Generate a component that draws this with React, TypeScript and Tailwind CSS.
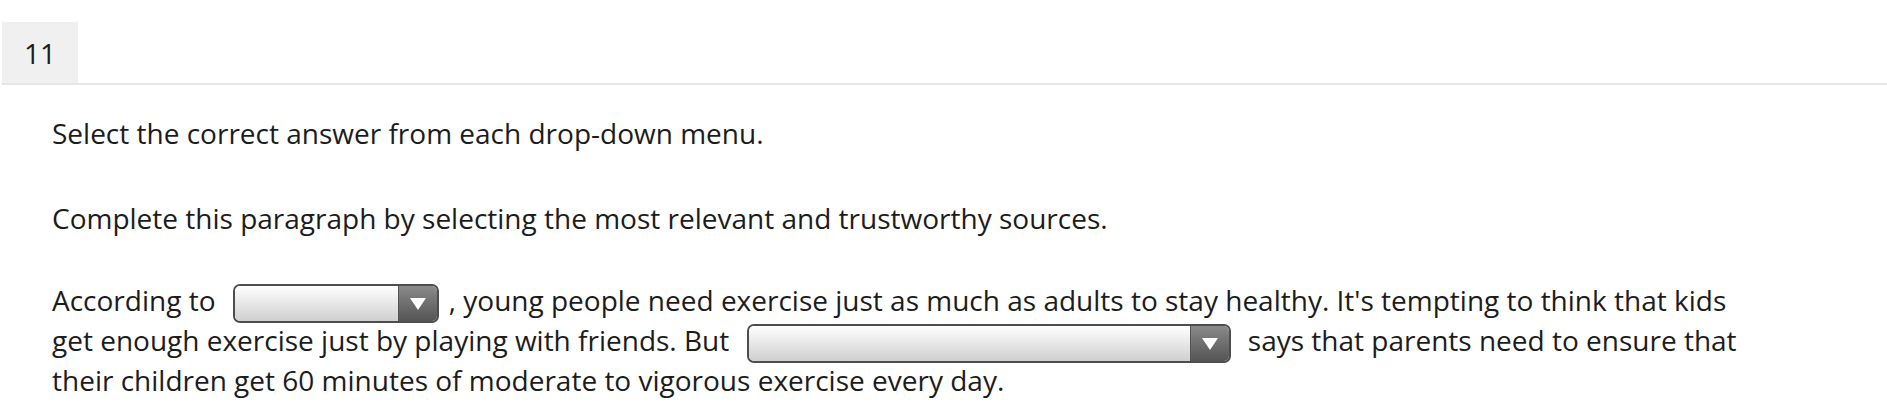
function Dropdown({ width }: { width: number }) {
  return (
    <span
      className="mx-[10px] -my-[12px] inline-flex h-[39px] overflow-hidden rounded-[7px] border-2 border-[#4d4d4d] align-middle"
      style={{ width }}
    >
      <span className="flex-1 bg-gradient-to-b from-[#ffffff] to-[#cfcfcf]" />
      <span className="flex w-[39px] items-center justify-center border-l border-[#555555] bg-gradient-to-b from-[#8a8a8a] to-[#555555]">
        <svg width="18" height="14" viewBox="0 0 18 14">
          <polygon points="1,1 17,1 9,13" fill="#ffffff" />
        </svg>
      </span>
    </span>
  );
}

export default function App() {
  return (
    <div
      className="min-h-[405px] bg-white pl-[2px] pt-[22px] text-[#1c1c1c]"
      style={{ fontFamily: '"Open Sans", "Noto Sans", sans-serif' }}
    >
      <div className="flex border-b-2 border-[#e6e6e6]">
        <div className="flex h-[61px] w-[76px] items-center justify-center bg-[#f0f0f0] text-[28px]">
          11
        </div>
      </div>

      <div className="w-[1760px] pl-[50px] text-[28px] leading-[39.7px]">
        <p className="mt-[29px]">Select the correct answer from each drop-down menu.</p>
        <p className="mt-[45px]">Complete this paragraph by selecting the most relevant and trustworthy sources.</p>
        <p className="mt-[43px]">
          According to <Dropdown width={206} />, young people need exercise just as much as adults to
          stay healthy. It's tempting to think that kids get enough exercise just by playing with
          friends. But <Dropdown width={484} /> says that parents need to ensure that their children
          get 60 minutes of moderate to vigorous exercise every day.
        </p>
      </div>
    </div>
  );
}
